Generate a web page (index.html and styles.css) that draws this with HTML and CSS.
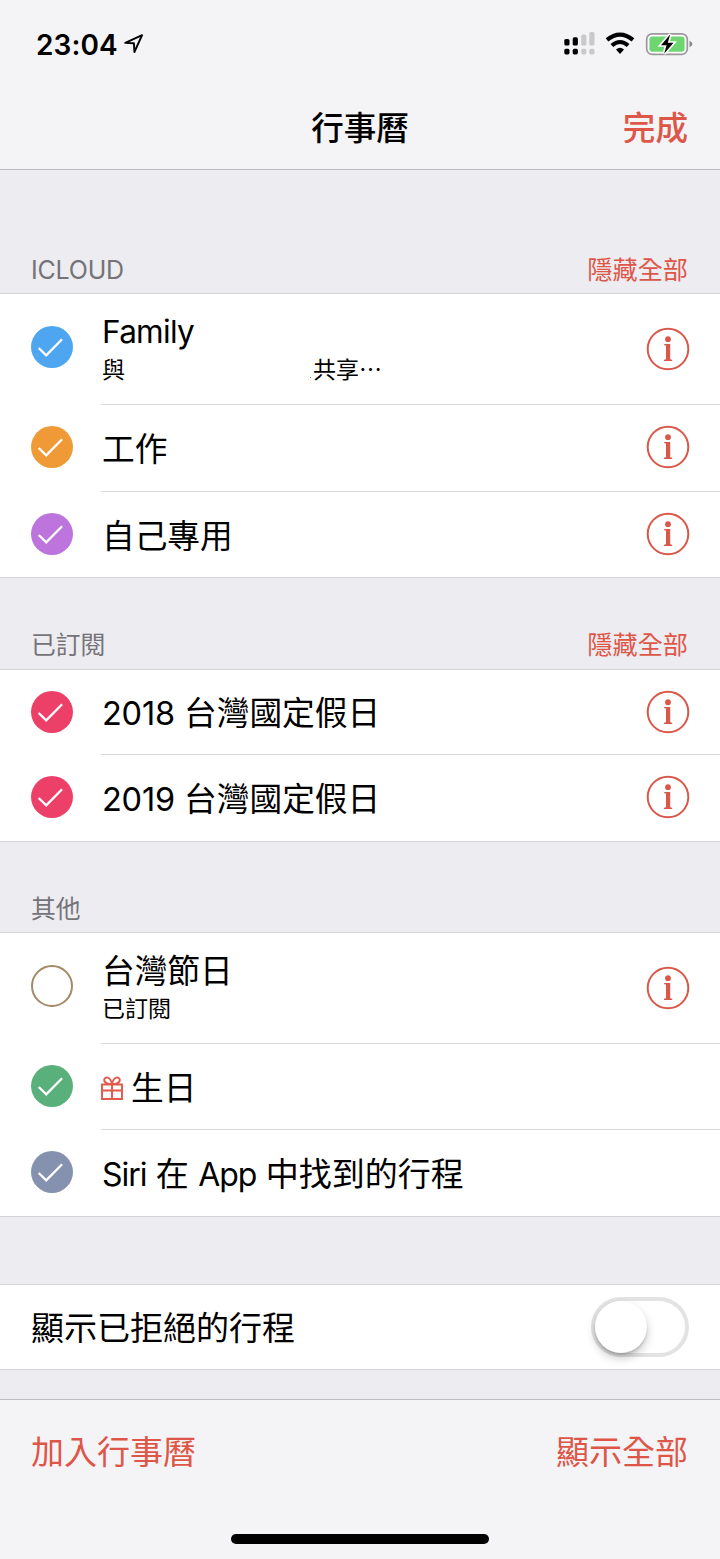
FILE: index.html
```html
<!DOCTYPE html>
<html lang="zh-Hant">
<head>
<meta charset="utf-8">
<title>行事曆</title>
<link rel="stylesheet" href="styles.css">
</head>
<body>
<svg class="defs" width="0" height="0" aria-hidden="true">
  <symbol id="tick" viewBox="0 0 42 42"><circle cx="21" cy="21" r="21" fill="currentColor"/><path d="M7.7 22 L15.2 29.3 L31.1 13.2" fill="none" stroke="#fff" stroke-width="2.3"/></symbol>
  <symbol id="info" viewBox="0 0 44 44"><circle cx="22" cy="22" r="20.3" fill="none" stroke="currentColor" stroke-width="2"/><circle cx="22" cy="12.2" r="2.9" fill="currentColor"/><path d="M18.2 17H24.2V32.3L26.2 32.7V34H18V32.7L20 32.3V18.6L18.2 18.2Z" fill="currentColor"/></symbol>
</svg>
<div class="screen">
  <header class="top">
    <div class="status">
      <span class="time">23:04</span>
      <svg class="loc" width="20" height="20" viewBox="0 0 20 20"><path d="M1.3 8.9 L18.1 1.2 L10.4 18 L9.9 9.3 Z" fill="none" stroke="#000" stroke-width="1.9" stroke-linejoin="round"/></svg>
      <svg class="signals" width="130" height="26" viewBox="0 0 130 26">
        <g><rect x="1.3" y="9" width="5.2" height="6.5" rx="1.6"/><rect x="9.7" y="7.3" width="5.2" height="8.2" rx="1.6"/><rect x="1.3" y="18.8" width="5.2" height="5.6" rx="1.6"/><rect x="9.7" y="18.8" width="5.2" height="5.6" rx="1.6"/></g>
        <g fill="#c9c9cb"><rect x="18.2" y="4.4" width="5.2" height="11.1" rx="1.6"/><rect x="26.3" y="2" width="5.2" height="13.5" rx="1.6"/><rect x="18.2" y="18.8" width="5.2" height="5.6" rx="1.6"/><rect x="26.3" y="18.8" width="5.2" height="5.6" rx="1.6"/></g>
        <path d="M44 9.9 Q57 -.8 70 9.9" fill="none" stroke="#000" stroke-width="4.2"/>
        <path d="M48.9 15.5 Q57 8.5 65.1 15.5" fill="none" stroke="#000" stroke-width="4"/>
        <path d="M53 19.6 Q57 16.1 61 19.6 L57 24 Z"/>
        <rect x="83.7" y="3.8" width="40.6" height="20.6" rx="5.6" fill="#fff" stroke="#99999c" stroke-width="1.7"/>
        <rect x="86.4" y="6.4" width="35.2" height="15.3" rx="3" fill="#6dd670"/>
        <path d="M126.5 10.8 Q129.4 12 129.4 14 Q129.4 16 126.5 17.3Z" fill="#88888b"/>
        <path d="M107.3 4.2 L98 15.2 H103.6 L101.1 23.7 L110.5 12.8 H104.8 Z" stroke="#fff" stroke-width="3.2" stroke-linejoin="miter" paint-order="stroke"/>
      </svg>
    </div>
    <div class="nav"><span class="title">行事曆</span><span class="done">完成</span></div>
  </header>

  <main class="body">
    <div class="head first"><span class="latin">ICLOUD</span><span class="action">隱藏全部</span></div>
    <section class="group">
      <div class="row tall"><svg class="check blue"><use href="#tick"/></svg>
        <div class="cell"><div class="texts"><span class="name family">Family</span><span class="sub shared"><span>與</span><span class="rest">共享⋯</span></span></div><svg class="info"><use href="#info"/></svg></div></div>
      <div class="row"><svg class="check orange"><use href="#tick"/></svg><div class="cell line"><span class="name">工作</span><svg class="info"><use href="#info"/></svg></div></div>
      <div class="row low"><svg class="check purple"><use href="#tick"/></svg><div class="cell line"><span class="name">自己專用</span><svg class="info"><use href="#info"/></svg></div></div>
    </section>

    <div class="head second"><span>已訂閱</span><span class="action">隱藏全部</span></div>
    <section class="group">
      <div class="row short"><svg class="check pink"><use href="#tick"/></svg><div class="cell"><span class="name"><span class="num">2018</span> 台灣國定假日</span><svg class="info"><use href="#info"/></svg></div></div>
      <div class="row"><svg class="check pink"><use href="#tick"/></svg><div class="cell line"><span class="name"><span class="num">2019</span> 台灣國定假日</span><svg class="info"><use href="#info"/></svg></div></div>
    </section>

    <div class="head third"><span>其他</span></div>
    <section class="group">
      <div class="row tall"><span class="check ring"></span>
        <div class="cell"><div class="texts"><span class="name">台灣節日</span><span class="sub">已訂閱</span></div><svg class="info"><use href="#info"/></svg></div></div>
      <div class="row low"><svg class="check green"><use href="#tick"/></svg>
        <div class="cell line"><span class="name gifted"><svg class="gift" width="22" height="24" viewBox="0 0 22 24" fill="none" stroke="currentColor" stroke-width="1.9"><path d="M1 8.5H21V14.5H1ZM1 14.5V23H21V14.5M11 8.5V23"/><path d="M11 8.1C7 8.2 3 6.8 3.2 3.8C3.5.6 9.2-.4 11 8.1C12.8-.4 18.5.6 18.8 3.8C19 6.8 15 8.2 11 8.1Z"/></svg>生日</span></div></div>
      <div class="row"><svg class="check slate"><use href="#tick"/></svg><div class="cell line"><span class="name mixed"><span class="word">Siri</span> 在 <span class="word">App</span> 中找到的行程</span></div></div>
    </section>

    <section class="group declined"><span class="name">顯示已拒絕的行程</span><span class="switch"><span class="knob"></span></span></section>
  </main>

  <footer class="bottom">
    <div class="tools"><span>加入行事曆</span><span>顯示全部</span></div>
    <div class="home"></div>
  </footer>
</div>
</body>
</html>
```
FILE: styles.css
```css
* { box-sizing: border-box; }
body { margin: 0; font-family: Inter, "Noto Sans CJK TC", sans-serif; color: #000; }
svg { display: block; flex: none; }
.defs { position: absolute; }
.screen { width: 720px; height: 1559px; display: flex; flex-direction: column; background: #edecf1; overflow: hidden; white-space: nowrap; }

.top { height: 170px; background: #f4f4f6; border-bottom: 1px solid #bdbcc2; }
.status { height: 86px; padding: 30px 27px 0 36px; display: flex; align-items: flex-start; }
.time { width: 88px; padding-top: 1px; font-size: 28px; font-weight: 600; line-height: 29px; letter-spacing: .1px; }
.loc { margin-top: 4px; }
.signals { margin-left: auto; }
.nav { height: 83px; padding: 0 32px; display: grid; grid-template-columns: 1fr auto 1fr; align-items: center; font-size: 32.6px; font-weight: 500; line-height: 48px; }
.title { grid-column: 2; }
.done { justify-self: end; color: #de5647; }

.body { height: 1229px; }
.head { padding: 0 32px 3px 31px; display: flex; justify-content: space-between; align-items: flex-end; font-size: 24.8px; line-height: 40px; color: #747378; }
.head.first { height: 123px; }
.head.second { height: 91px; padding-bottom: 4px; }
.head.third { height: 90px; }
.head .latin { font-size: 25px; letter-spacing: -.2px; }
.action { font-size: 25.2px; color: #de5647; }

.group { background: #fff; border-top: 1px solid #d4d3d8; border-bottom: 1px solid #d4d3d8; }
.row { height: 87px; padding-left: 31px; display: flex; align-items: center; }
.row.tall { height: 110px; }
.row.low { height: 86px; }
.row.short { height: 84px; }
.check { width: 42px; height: 42px; margin: 0 28px 1px 0; }
.tall .check { margin-bottom: 4px; }
.cell { flex: 1; height: 100%; padding: 0 30px 0 1px; display: flex; align-items: center; justify-content: space-between; }
.cell.line { box-shadow: inset 0 1px #d9d9dc; }
.name { padding-top: 3px; font-size: 32.7px; line-height: 48px; }
.num { font-size: 32.5px; letter-spacing: -.2px; }
.texts .name { height: 50px; }
.family { font-size: 31.5px; letter-spacing: -.7px; }
.mixed { font-size: 33px; }
.word { font-size: 32px; letter-spacing: -1px; }
.texts { display: flex; flex-direction: column; height: 100%; padding-top: 11px; }
.sub { font-size: 23px; line-height: 30px; }
.shared { display: grid; grid-template-columns: 208px auto; }
.rest::before { content: ""; display: inline-block; width: 1px; height: 1px; margin-right: 2px; background: #888; }
.info { width: 44px; height: 44px; color: #d95849; }
.cell > .info { margin-bottom: 1px; }
.tall .cell > .info { margin-bottom: 0; }
.blue { color: #4ea6f0; }
.orange { color: #f09a37; }
.purple { color: #bd74dc; }
.pink { color: #ec4068; }
.green { color: #5ab07b; }
.slate { color: #8492af; }
.ring { flex: none; border: 2px solid #a28a66; border-radius: 50%; }
.gifted { display: flex; align-items: center; gap: 8px; margin-left: -1px; }
.gift { color: #e05a4c; }

.declined { height: 86px; margin-top: 67px; padding: 0 31px; display: flex; align-items: center; justify-content: space-between; }
.declined .name { padding-top: 1px; font-size: 33px; }
.switch { width: 98px; height: 60px; border: 4px solid #e3e3e4; border-radius: 30px; }
.knob { display: block; width: 52px; height: 52px; border-radius: 50%; background: #fff; box-shadow: 0 5px 10px rgba(0,0,0,.22), 0 2px 2px rgba(0,0,0,.14); }

.bottom { height: 160px; background: #f4f4f6; border-top: 1px solid #bdbcc2; display: flex; flex-direction: column; align-items: center; }
.tools { width: 100%; height: 134px; padding: 28px 32px 0 31px; display: flex; justify-content: space-between; font-size: 33px; line-height: 48px; color: #de5647; }
.home { width: 258px; height: 10px; border-radius: 5px; background: #000; }
```
